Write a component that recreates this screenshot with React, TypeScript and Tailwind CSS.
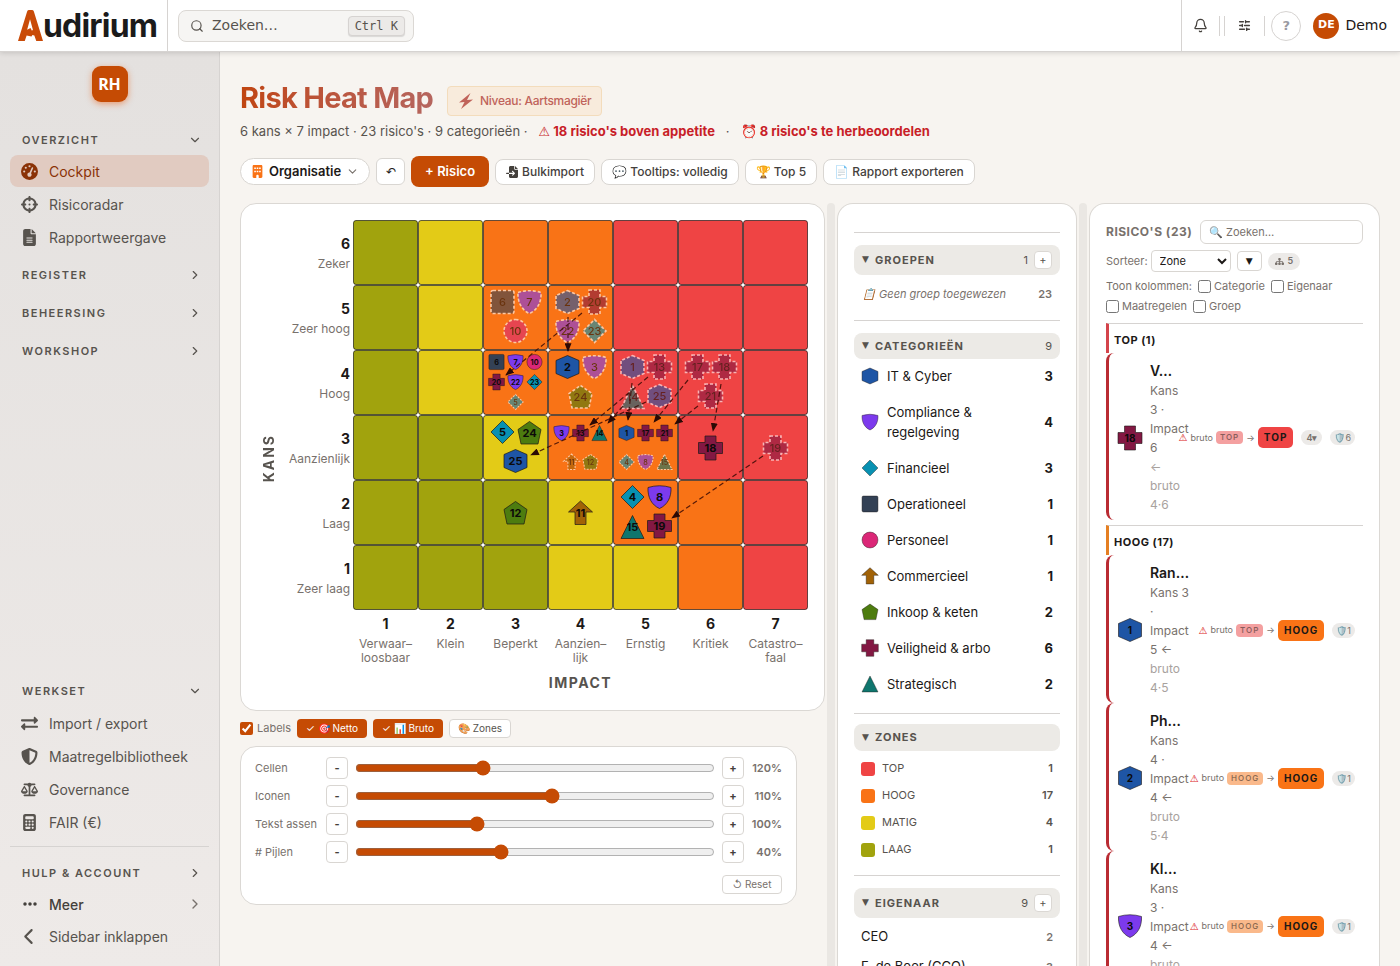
import type { ReactNode } from 'react'
import { Bell, ChevronDown, ChevronRight, Search, SlidersHorizontal } from 'lucide-react'
import { FaExchangeAlt } from 'react-icons/fa'
import {
  FaBuilding,
  FaCalculator,
  FaChevronLeft,
  FaCrosshairs,
  FaEllipsis,
  FaFileImport,
  FaFileLines,
  FaGaugeHigh,
  FaScaleBalanced,
  FaShieldHalved,
  FaSitemap,
} from 'react-icons/fa6'

type ShapeName = 'hex' | 'shield' | 'diamond' | 'square' | 'circle' | 'arrow' | 'pentagon' | 'cross' | 'triangle'

// All shapes live in a 24x24 box centred on 0,0
const SHAPES: Record<ShapeName, { d: string; color: string }> = {
  hex:      { color: '#1e55a5', d: 'M0 -11.5 L11.5 -6.5 V6.5 L0 11.5 L-11.5 6.5 V-6.5 Z' },
  shield:   { color: '#7c3aed', d: 'M-11.5 -9.5 Q0 -13 11.5 -9.5 C12 0 8 8 0 11.5 C-8 8 -12 0 -11.5 -9.5 Z' },
  diamond:  { color: '#0891b2', d: 'M0 -11.5 L11.5 0 L0 11.5 L-11.5 0 Z' },
  square:   { color: '#334155', d: 'M-9.5 -11.5 H9.5 Q11.5 -11.5 11.5 -9.5 V9.5 Q11.5 11.5 9.5 11.5 H-9.5 Q-11.5 11.5 -11.5 9.5 V-9.5 Q-11.5 -11.5 -9.5 -11.5 Z' },
  circle:   { color: '#db2777', d: 'M0 -11.5 A11.5 11.5 0 1 1 0 11.5 A11.5 11.5 0 1 1 0 -11.5 Z' },
  arrow:    { color: '#a16207', d: 'M0 -12 L12 -1 H5.5 V11.5 H-5.5 V-1 H-12 Z' },
  pentagon: { color: '#4d7c0f', d: 'M0 -11.5 L11.5 -3.5 L8.5 11 H-8.5 L-11.5 -3.5 Z' },
  cross:    { color: '#831843', d: 'M-5.5 -12 H5.5 V-5.5 H12 V5.5 H5.5 V12 H-5.5 V5.5 H-12 V-5.5 H-5.5 Z' },
  triangle: { color: '#0f766e', d: 'M0 -11.5 L11.5 11.5 H-11.5 Z' },
}

const ZONE_COLORS: Record<string, string> = {
  T: '#ef4444',
  H: '#f97316',
  M: '#e3cb17',
  L: '#a1a30d',
}

// Top row is kans 6
const ROWS = ['LMHHTTT', 'LMHHTTT', 'LMHHTTT', 'LLMHHTT', 'LLLMHHT', 'LLLMMHT']

const CELL = 65

type Marker = [n: number, shape: ShapeName, x: number, y: number, size: 'lg' | 'sm']

const GROSS: Marker[] = [
  [6, 'square', 150, 82, 'lg'],
  [7, 'shield', 177, 82, 'lg'],
  [10, 'circle', 163, 111, 'lg'],
  [2, 'hex', 215, 82, 'lg'],
  [20, 'cross', 242, 82, 'lg'],
  [22, 'shield', 215, 111, 'lg'],
  [23, 'diamond', 242, 111, 'lg'],
  [5, 'diamond', 163, 182, 'sm'],
  [3, 'shield', 242, 147, 'lg'],
  [24, 'pentagon', 228, 177, 'lg'],
  [1, 'hex', 280, 147, 'lg'],
  [13, 'cross', 307, 147, 'lg'],
  [14, 'triangle', 280, 177, 'lg'],
  [25, 'hex', 307, 176, 'lg'],
  [17, 'cross', 345, 147, 'lg'],
  [18, 'cross', 372, 147, 'lg'],
  [21, 'cross', 358, 176, 'lg'],
  [11, 'arrow', 219, 242, 'sm'],
  [12, 'pentagon', 238, 242, 'sm'],
  [4, 'diamond', 274, 242, 'sm'],
  [8, 'shield', 293, 242, 'sm'],
  [15, 'triangle', 312, 242, 'sm'],
  [19, 'cross', 423, 228, 'lg'],
]

const NET: Marker[] = [
  [6, 'square', 144, 142, 'sm'],
  [7, 'shield', 163, 142, 'sm'],
  [10, 'circle', 182, 142, 'sm'],
  [20, 'cross', 144, 162, 'sm'],
  [22, 'shield', 163, 162, 'sm'],
  [23, 'diamond', 182, 162, 'sm'],
  [2, 'hex', 215, 147, 'lg'],
  [5, 'diamond', 150, 212, 'lg'],
  [24, 'pentagon', 177, 213, 'lg'],
  [25, 'hex', 163, 241, 'lg'],
  [3, 'shield', 209, 213, 'sm'],
  [13, 'cross', 228, 213, 'sm'],
  [14, 'triangle', 247, 213, 'sm'],
  [1, 'hex', 274, 213, 'sm'],
  [17, 'cross', 293, 213, 'sm'],
  [21, 'cross', 312, 213, 'sm'],
  [18, 'cross', 358, 228, 'lg'],
  [12, 'pentagon', 163, 293, 'lg'],
  [11, 'arrow', 228, 293, 'lg'],
  [4, 'diamond', 280, 277, 'lg'],
  [8, 'shield', 307, 277, 'lg'],
  [15, 'triangle', 280, 307, 'lg'],
  [19, 'cross', 307, 306, 'lg'],
]

const ARROWS = [
  [229, 93, 153, 155],
  [215, 97, 215, 131],
  [295, 157, 237, 205],
  [270, 186, 255, 203],
  [293, 182, 178, 235],
  [279, 163, 275, 200],
  [335, 160, 301, 202],
  [368, 164, 360, 211],
  [345, 186, 322, 204],
  [410, 236, 319, 298],
]

const IMPACTS = ['Verwaar–\nloosbaar', 'Klein', 'Beperkt', 'Aanzien–\nlijk', 'Ernstig', 'Kritiek', 'Catastro–\nfaal']
const CHANCES = ['Zeker', 'Zeer hoog', 'Hoog', 'Aanzienlijk', 'Laag', 'Zeer laag']

const CATEGORIES: { name: string; shape: ShapeName; count: number }[] = [
  { name: 'IT & Cyber', shape: 'hex', count: 3 },
  { name: 'Compliance & regelgeving', shape: 'shield', count: 4 },
  { name: 'Financieel', shape: 'diamond', count: 3 },
  { name: 'Operationeel', shape: 'square', count: 1 },
  { name: 'Personeel', shape: 'circle', count: 1 },
  { name: 'Commercieel', shape: 'arrow', count: 1 },
  { name: 'Inkoop & keten', shape: 'pentagon', count: 2 },
  { name: 'Veiligheid & arbo', shape: 'cross', count: 6 },
  { name: 'Strategisch', shape: 'triangle', count: 2 },
]

const ZONES = [
  { name: 'TOP', count: 1, bg: 'bg-[#ef4444]' },
  { name: 'HOOG', count: 17, bg: 'bg-[#f97316]' },
  { name: 'MATIG', count: 4, bg: 'bg-[#e3cb17]' },
  { name: 'LAAG', count: 1, bg: 'bg-[#a1a30d]' },
]

const SLIDERS = [
  { label: 'Cellen', value: '120%', pos: 35 },
  { label: 'Iconen', value: '110%', pos: 55 },
  { label: 'Tekst assen', value: '100%', pos: 33 },
  { label: '# Pijlen', value: '40%', pos: 40 },
]

type Risk = {
  n: number
  shape: ShapeName
  title: string
  lines: string[]
  bruto: string[]
  from: 'TOP' | 'HOOG'
  to: 'TOP' | 'HOOG'
  extra?: string
  measures: number
}

const TOP_RISKS: Risk[] = [
  { n: 18, shape: 'cross', title: 'V…', lines: ['Kans', '3 ·', 'Impact', '6'], bruto: ['←', 'bruto', '4·6'], from: 'TOP', to: 'TOP', extra: '4▾', measures: 6 },
]

const HIGH_RISKS: Risk[] = [
  { n: 1, shape: 'hex', title: 'Ran…', lines: ['Kans 3', '·', 'Impact', '5 ←'], bruto: ['bruto', '4·5'], from: 'TOP', to: 'HOOG', measures: 1 },
  { n: 2, shape: 'hex', title: 'Ph…', lines: ['Kans', '4 ·', 'Impact', '4 ←'], bruto: ['bruto', '5·4'], from: 'HOOG', to: 'HOOG', measures: 1 },
  { n: 3, shape: 'shield', title: 'Kl…', lines: ['Kans', '3 ·', 'Impact', '4 ←'], bruto: ['bruto', '4·4'], from: 'HOOG', to: 'HOOG', measures: 1 },
]

function ShapeIcon({ shape, n, className }: { shape: ShapeName; n?: number; className: string }) {
  return (
    <svg viewBox="-13 -13 26 26" className={className} aria-hidden="true">
      <path d={SHAPES[shape].d} fill={SHAPES[shape].color} stroke="#1c1917" strokeOpacity={0.6} />
      {n !== undefined && (
        <text y={4} textAnchor="middle" fontSize={10} fontWeight={700} fill="#0c0a09">{n}</text>
      )}
    </svg>
  )
}

function MarkerShape({ marker, gross }: { marker: Marker; gross: boolean }) {
  const [n, shape, x, y, size] = marker
  const scale = size === 'lg' ? 1 : 0.66
  return (
    <g transform={`translate(${x - 0.5} ${y}) scale(${scale})`} opacity={gross ? 0.6 : 1}>
      <path
        d={SHAPES[shape].d}
        fill={SHAPES[shape].color}
        stroke={gross ? '#fff' : '#1c1917'}
        strokeOpacity={gross ? 1 : 0.7}
        strokeWidth={gross ? 1.6 : 1}
        strokeDasharray={gross ? '3 2' : undefined}
      />
      <text y={4} textAnchor="middle" fontSize={11} fontWeight={gross ? 500 : 700} fill="#0c0a09">{n}</text>
    </g>
  )
}

function HeatMap() {
  return (
    <svg width={CELL * 7} height={CELL * 6} viewBox={`0 0 ${CELL * 7} ${CELL * 6}`} className="block shrink-0">
      <defs>
        <marker id="head" viewBox="0 0 10 8" refX={9} refY={4} markerWidth={9} markerHeight={7} markerUnits="userSpaceOnUse" orient="auto">
          <path d="M0 0 L10 4 L0 8 Z" fill="#2b0a05" />
        </marker>
      </defs>
      {ROWS.map((row, r) =>
        row.split('').map((zone, c) => (
          <rect
            key={`${r}-${c}`}
            x={c * CELL + 0.5}
            y={r * CELL + 0.5}
            width={CELL - 1}
            height={CELL - 1}
            rx={2.5}
            fill={ZONE_COLORS[zone]}
            stroke="#000"
            strokeOpacity={0.6}
          />
        ))
      )}
      {GROSS.map((m) => <MarkerShape key={m[0]} marker={m} gross />)}
      {NET.map((m) => <MarkerShape key={m[0]} marker={m} gross={false} />)}
      {ARROWS.map(([x1, y1, x2, y2]) => (
        <line key={`${x1}-${y1}`} x1={x1} y1={y1} x2={x2} y2={y2} stroke="#3b0a05" strokeOpacity={0.85} strokeWidth={1.2} strokeDasharray="5 3" markerEnd="url(#head)" />
      ))}
    </svg>
  )
}

function Logo() {
  return (
    <a href="#" aria-label="Audirium" className="flex items-end text-[#1b1b1b]">
      <svg width="25" height="33" viewBox="0 0 26 33" aria-hidden="true" className="mb-px">
        <path d="M9.500 2 Q10 0.500 11.500 0.500 H14.500 Q16 0.500 16.500 2 L26 32.500 H19 L17 27 L15 26.500 L14 28 L9 27 L7 32.500 H0 Z M12.500 10 L9.500 21 L13 19 L14.500 22 L15.500 21 Z" fill="#c94b08" fillRule="evenodd" />
      </svg>
      <span className="text-[32px] leading-[34px] font-bold tracking-tight">udirium</span>
    </a>
  )
}

function NavHead({ label, open = false }: { label: string; open?: boolean }) {
  return (
    <button type="button" className="flex w-full items-center justify-between pr-[7px] pl-3 text-[11px] leading-4 font-semibold tracking-[1.5px] text-[#57534e]">
      {label}
      {open ? <ChevronDown size={14} /> : <ChevronRight size={14} />}
    </button>
  )
}

function NavItem({ icon, label, active = false }: { icon: ReactNode; label: string; active?: boolean }) {
  return (
    <a
      href="#"
      className={`flex h-8 items-center gap-2.5 rounded-lg px-2.5 text-[14px] ${active ? 'bg-[#e1cbc1] text-[#8a3206]' : 'text-[#57534e]'}`}
    >
      <span className="flex w-[19px] justify-center text-[17px]">{icon}</span>
      {label}
    </a>
  )
}

function Sidebar() {
  return (
    <aside className="flex w-[220px] shrink-0 flex-col border-r border-[#d6d3d1] bg-linear-to-b from-[#e4e1df] to-[#eeeae8] px-2.5 pt-3.5 pb-3.5">
      <div className="mx-auto flex size-9 items-center justify-center rounded-[9px] bg-[#c54b04] font-['Noto_Sans',sans-serif] text-[16px] font-bold text-white shadow-[0_2px_6px_rgba(234,88,12,0.5)]">
        RH
      </div>
      <nav className="mt-[30px] flex flex-1 flex-col">
        <NavHead label="OVERZICHT" open />
        <div className="mt-[7px] flex flex-col gap-px">
          <NavItem active icon={<FaGaugeHigh />} label="Cockpit" />
          <NavItem icon={<FaCrosshairs />} label="Risicoradar" />
          <NavItem icon={<FaFileLines />} label="Rapportweergave" />
        </div>
        <div className="mt-3.5 flex flex-col gap-[22px]">
          <NavHead label="REGISTER" />
          <NavHead label="BEHEERSING" />
          <NavHead label="WORKSHOP" />
        </div>
        <div className="mt-auto">
          <NavHead label="WERKSET" open />
          <div className="mt-2 flex flex-col gap-px">
            <NavItem icon={<FaExchangeAlt />} label="Import / export" />
            <NavItem icon={<FaShieldHalved />} label="Maatregelbibliotheek" />
            <NavItem icon={<FaScaleBalanced />} label="Governance" />
            <NavItem icon={<FaCalculator />} label="FAIR (€)" />
          </div>
        </div>
        <hr className="mt-2 mb-[18px] border-[#d6d3d1]" />
        <NavHead label="HULP & ACCOUNT" />
        <a href="#" className="mt-[7px] flex h-8 items-center gap-2.5 pr-1.5 pl-2.5 text-[14px] font-medium text-[#44403c]">
          <span className="flex w-[19px] justify-center text-[16px]"><FaEllipsis /></span>
          <span className="flex-1">Meer</span>
          <ChevronRight size={16} className="text-[#78716c]" />
        </a>
        <NavItem icon={<FaChevronLeft />} label="Sidebar inklappen" />
      </nav>
    </aside>
  )
}

function TopBar() {
  return (
    <header className="relative z-10 flex h-[52px] shrink-0 items-center border-b border-[#d6d3d1] bg-white font-['DejaVu_Sans',sans-serif] shadow-[0_1px_5px_rgba(0,0,0,0.14)]">
      <div className="flex h-full w-[168px] items-center border-r border-[#d6d3d1] pl-[18px] font-['Inter',sans-serif]">
        <Logo />
      </div>
      <button type="button" className="ml-2.5 flex h-8 w-[236px] items-center rounded-lg border border-[#dbd8d4] bg-[#f6f5f3] pr-2 pl-[11px] text-[14px] text-[#57534e]">
        <Search size={14} />
        <span className="ml-2 flex-1 text-left">Zoeken…</span>
        <kbd className="rounded border border-[#d6d3d1] bg-[#eceae8] px-1.5 font-['DejaVu_Sans_Mono',monospace] text-[12px] leading-[18px] shadow-[0_1px_1px_rgba(0,0,0,0.12)]">Ctrl K</kbd>
      </button>
      <div className="ml-auto flex h-full items-center border-l border-[#d6d3d1] pr-[13px] pl-2.5 text-[#44403c]">
        <button type="button" aria-label="Meldingen" className="p-px"><Bell size={15} strokeWidth={2} /></button>
        <span className="ml-2.5 h-5 w-1.5 border-x border-[#d6d3d1]" />
        <button type="button" aria-label="Instellingen" className="ml-3 p-px"><SlidersHorizontal size={13} strokeWidth={2.5} /></button>
        <span className="mr-1.5 ml-3 h-5 border-l border-[#d6d3d1]" />
        <button type="button" className="size-[30px] rounded-full border border-[#d6d3d1] text-[13px] font-bold text-[#9a9aa2]">?</button>
        <span className="ml-3 flex size-[26px] items-center justify-center rounded-full bg-[#c54b04] text-[11px] font-bold text-white">DE</span>
        <span className="ml-1.5 text-[14px] text-[#1c1917]">Demo</span>
      </div>
    </header>
  )
}

function ToolButton({ children }: { children: ReactNode }) {
  return (
    <button type="button" className="flex h-[26px] items-center gap-1 rounded-lg border border-[#d9d6d2] bg-white px-2.5 text-[12px] font-medium whitespace-nowrap text-[#44403c]">
      {children}
    </button>
  )
}

function StepButton({ sign }: { sign: string }) {
  return (
    <button type="button" className="h-[22px] w-[22px] shrink-0 rounded border border-[#d9d6d2] bg-white text-[11px] leading-none font-bold text-[#44403c]">{sign}</button>
  )
}

function ControlPanel() {
  return (
    <div className="mt-2 mr-7 rounded-2xl border border-[#dbd8d4] bg-white px-3.5 py-2.5">
      <div className="flex flex-col gap-1.5">
        {SLIDERS.map((s) => (
          <div key={s.label} className="flex items-center text-[11px] text-[#78716c]">
            <label htmlFor={s.label} className="w-[71px] shrink-0">{s.label}</label>
            <StepButton sign="-" />
            <input id={s.label} type="range" defaultValue={s.pos} className="mx-[7px] min-w-0 flex-1 accent-[#c54b04]" />
            <StepButton sign="+" />
            <span className="w-[38px] shrink-0 text-right font-semibold">{s.value}</span>
          </div>
        ))}
      </div>
      <div className="mt-3 flex justify-end">
        <button type="button" className="h-[19px] w-[60px] rounded border border-[#d9d6d2] text-[10px] text-[#78716c]">↺ Reset</button>
      </div>
    </div>
  )
}

function MapColumn() {
  return (
    <section className="min-w-0 flex-1">
      <div className="flex justify-end rounded-2xl border border-[#dbd8d4] bg-white p-4 pb-[17px]">
        <div className="flex w-6 items-center justify-center">
          <span className="mt-1 rotate-180 text-[14px] font-bold tracking-[2px] text-[#57534e] [writing-mode:vertical-rl]">KANS</span>
        </div>
        <div>
          <div className="flex">
            <div className="mr-[3px] flex flex-col text-right">
              {CHANCES.map((label, i) => (
                <div key={label} className="flex h-[65px] w-[70px] flex-col items-end justify-center pt-0.5">
                  <span className="text-[14px] leading-5 font-bold text-[#1c1917]">{6 - i}</span>
                  <span className="text-[12px] leading-5 whitespace-nowrap text-[#78716c]">{label}</span>
                </div>
              ))}
            </div>
            <HeatMap />
          </div>
          <div className="ml-[73px] grid grid-cols-7 pt-1 text-center">
            {IMPACTS.map((label, i) => (
              <div key={label}>
                <div className="text-[14px] leading-5 font-bold text-[#1c1917]">{i + 1}</div>
                <div className="mt-[3px] text-[12px] leading-3.5 whitespace-pre-line text-[#78716c]">{label}</div>
              </div>
            ))}
          </div>
          <div className="mt-2 ml-[73px] text-center text-[14px] leading-5 font-bold tracking-[1.5px] text-[#57534e]">IMPACT</div>
        </div>
      </div>
      <div className="mt-2 flex h-[19px] items-center gap-1.5 text-[10px] text-[#57534e]">
        <label className="flex items-center gap-1 text-[11px] text-[#78716c]">
          <input type="checkbox" defaultChecked className="size-[13px] accent-[#c54b04]" />
          Labels
        </label>
        <button type="button" className="h-[19px] rounded bg-[#c54b04] px-[9px] text-white">✓ 🎯 Netto</button>
        <button type="button" className="h-[19px] rounded bg-[#c54b04] px-[9px] text-white">✓ 📊 Bruto</button>
        <button type="button" className="h-[19px] rounded border border-[#d9d6d2] bg-white px-2">🎨 Zones</button>
      </div>
      <ControlPanel />
    </section>
  )
}

function GroupHead({ label, count, add = false, className }: { label: string; count?: number; add?: boolean; className: string }) {
  return (
    <div className={`flex items-center rounded-lg bg-[#eceae6] px-2 text-[11px] text-[#57534e] ${className}`}>
      <span className="w-[13px] font-['DejaVu_Sans',sans-serif] text-[9px]">▼</span>
      <h3 className="flex-1 font-bold tracking-[1px]">{label}</h3>
      <span>{count}</span>
      {add && (
        <button type="button" aria-label={`${label} toevoegen`} className="ml-1.5 size-[18px] rounded border border-[#dbd8d4] bg-white text-[11px] leading-none">+</button>
      )}
    </div>
  )
}

function LegendColumn() {
  return (
    <section className="w-[240px] shrink-0 overflow-hidden rounded-t-2xl border border-b-0 border-[#dbd8d4] bg-white px-4 pt-7">
      <hr className="border-[#d6d3d1]" />
      <GroupHead label="GROEPEN" count={1} add className="mt-3 h-[30px]" />
      <div className="mt-[7px] flex h-6 items-center justify-between px-2 text-[11px] text-[#78716c]">
        <em>📋 Geen groep toegewezen</em>
        <b className="font-semibold">23</b>
      </div>
      <hr className="mt-3.5 border-[#d6d3d1]" />
      <GroupHead label="CATEGORIEËN" count={9} className="mt-3 h-[26px]" />
      <ul className="-mt-px text-[13px] leading-5 text-[#1c1917]">
        {CATEGORIES.map((c) => (
          <li key={c.name} className="flex items-center px-[7px] py-2">
            <ShapeIcon shape={c.shape} className="size-[18px] shrink-0" />
            <span className="ml-2 w-[120px]">{c.name}</span>
            <b className="ml-auto">{c.count}</b>
          </li>
        ))}
      </ul>
      <hr className="mt-[11px] border-[#d6d3d1]" />
      <GroupHead label="ZONES" className="mt-2.5 h-[27px]" />
      <ul className="mt-1 text-[11px] text-[#57534e]">
        {ZONES.map((z) => (
          <li key={z.name} className="flex h-[27px] items-center px-[7px]">
            <span className={`mr-[7px] size-3.5 rounded-[3px] ${z.bg}`} />
            {z.name}
            <b className="ml-auto font-semibold">{z.count}</b>
          </li>
        ))}
      </ul>
      <hr className="mt-3 border-[#d6d3d1]" />
      <GroupHead label="EIGENAAR" count={9} add className="mt-3 h-[30px]" />
      <ul className="mt-1 text-[13px] text-[#1c1917]">
        {[['CEO', 2], ['F. de Boer (CCO)', 3]].map(([name, count]) => (
          <li key={name} className="flex h-[30px] items-center justify-between px-[7px]">
            {name}
            <b className="text-[11px] font-semibold text-[#78716c]">{count}</b>
          </li>
        ))}
      </ul>
    </section>
  )
}

function RiskRow({ risk }: { risk: Risk }) {
  return (
    <li className="flex items-center rounded-lg border-l-3 border-[#b92b32] pt-2 pr-2 pb-1.5 pl-2">
      <ShapeIcon shape={risk.shape} n={risk.n} className="size-[26px] shrink-0" />
      <div className="ml-[7px] min-w-0 flex-1 text-[12px] leading-[19px] whitespace-nowrap text-[#78716c]">
        <div className="text-[14px] leading-5 font-semibold text-[#1c1917]">{risk.title}</div>
        {risk.lines.map((line) => <div key={line}>{line}</div>)}
        {risk.bruto.map((line) => <div key={line} className="text-[#a8a29e]">{line}</div>)}
      </div>
      <div className="flex shrink-0 items-center text-[9px] text-[#78716c]">
        <span className="font-['DejaVu_Sans',sans-serif] text-[10px] text-[#dc2626]">⚠</span>
        <span className="ml-[3px]">bruto</span>
        <span className={`ml-[3px] rounded px-1 text-[8px] leading-[13px] font-semibold tracking-[1px] text-[#1c1917]/50 ${risk.from === 'TOP' ? 'bg-[#f4a0a0]' : 'bg-[#fab98b]'}`}>
          {risk.from}
        </span>
        <span className="ml-[3px]">→</span>
        <span className={`ml-[3px] rounded-[5px] px-1.5 text-[10px] leading-[21px] font-bold tracking-[1px] text-[#1c1917] ${risk.to === 'TOP' ? 'bg-[#ef4444]' : 'bg-[#f97316]'}`}>
          {risk.to}
        </span>
        {risk.extra && <span className="ml-2 rounded-full bg-[#eceae8] px-[5px] leading-[15px] font-semibold">{risk.extra}</span>}
        <span className="ml-2 rounded-full bg-[#eceae8] px-1 leading-[15px]">🛡️{risk.measures}</span>
      </div>
    </li>
  )
}

function Check({ label }: { label: string }) {
  return (
    <label className="flex items-center gap-[3px]">
      <input type="checkbox" className="size-[13px]" />
      {label}
    </label>
  )
}

function RiskColumn() {
  return (
    <section className="w-[291px] shrink-0 overflow-hidden rounded-t-2xl border border-b-0 border-[#dbd8d4] bg-white px-4 pt-4">
      <div className="flex items-center justify-between">
        <h3 className="text-[12px] font-bold tracking-[0.5px] text-[#78716c]">RISICO'S (23)</h3>
        <input type="text" aria-label="Zoek risico" placeholder="🔍 Zoeken…" className="h-6 w-[163px] rounded-md border border-[#d9d6d2] px-2 text-[11px] placeholder:text-[#78716c]" />
      </div>
      <div className="mt-1.5 flex items-center text-[11px] text-[#78716c]">
        <label htmlFor="sort">Sorteer:</label>
        <select id="sort" className="ml-[3px] h-[22px] w-20 rounded border border-[#d9d6d2] bg-white px-1 text-[#1c1917]">
          <option>Zone</option>
        </select>
        <button type="button" aria-label="Sorteerrichting" className="ml-1.5 h-5 w-[25px] rounded border border-[#d9d6d2] font-['DejaVu_Sans',sans-serif] text-[9px] leading-none text-[#1c1917]">▼</button>
        <span className="ml-1.5 flex h-[17px] items-center gap-1 rounded-full bg-[#eceae8] px-[7px] text-[9px] font-semibold"><FaSitemap />5</span>
      </div>
      <div className="mt-1 flex flex-wrap items-center gap-x-1.5 text-[11px] leading-5 text-[#78716c]">
        <span>Toon kolommen:</span>
        <Check label="Categorie" />
        <Check label="Eigenaar" />
        <Check label="Maatregelen" />
        <Check label="Groep" />
      </div>
      <div className="mt-[7px] flex h-[30px] items-center border-t border-l-3 border-t-[#d6d3d1] border-l-[#d4444b] pt-1 pl-[5px] text-[11px] font-bold tracking-[0.5px] text-[#1c1917]">TOP (1)</div>
      <ul>{TOP_RISKS.map((r) => <RiskRow key={r.n} risk={r} />)}</ul>
      <div className="mt-[5px] flex h-[30px] items-center border-t border-l-3 border-t-[#d6d3d1] border-l-[#e57f22] pt-1 pl-[5px] text-[11px] font-bold tracking-[0.5px] text-[#1c1917]">HOOG (17)</div>
      <ul>{HIGH_RISKS.map((r) => <RiskRow key={r.n} risk={r} />)}</ul>
    </section>
  )
}

export default function App() {
  return (
    <div className="flex h-screen flex-col overflow-hidden bg-[#f7f4f0] font-['Inter',sans-serif] text-[#1c1917]">
      <TopBar />
      <div className="flex min-h-0 flex-1">
        <Sidebar />
        <main className="flex min-w-0 flex-1 flex-col px-5 pt-7">
          <div className="flex items-center">
            <h1 className="bg-linear-to-r from-[#c0450e] to-[#b5655e] bg-clip-text text-[29px] leading-9 font-bold tracking-tight text-transparent">Risk Heat Map</h1>
            <span className="mt-1.5 ml-3.5 flex h-[30px] items-center gap-1.5 rounded border border-[#f3dcbc] bg-[#f8ebdc] px-2.5 text-[12px] font-medium tracking-tight text-[#c0635a]">
              <svg width="16" height="16" viewBox="0 0 16 16" fill="currentColor" aria-hidden="true">
                <path d="M12.500 0 L1 9.500 L6.500 9 L3 16 L15 6.500 L9 7 Z" />
              </svg>
              Niveau: Aartsmagiër
            </span>
          </div>
          <p className="mt-[5px] text-[13px] leading-5 whitespace-pre text-[#57534e]">
            6 kans × 7 impact · 23 risico's · 9 categorieën ·{'   '}
            <b className="text-[#c81e28]"><span className="font-['DejaVu_Sans',sans-serif]">⚠</span> 18 risico's boven appetite</b>{'   ·   '}
            <b className="text-[#c81e28]">⏰ 8 risico's te herbeoordelen</b>
          </p>
          <div className="mt-3.5 flex items-center gap-1.5">
            <button type="button" className="flex h-[27px] items-center gap-[5px] rounded-full border border-[#d9d6d2] bg-white px-2.5 text-[13px] font-semibold">
              <FaBuilding className="text-[13px] text-[#f97316]" />
              Organisatie
              <ChevronDown size={13} className="text-[#78716c]" />
            </button>
            <button type="button" aria-label="Ongedaan maken" className="h-[27px] w-[29px] rounded-md border border-[#d9d6d2] bg-white text-[12px]">↶</button>
            <button type="button" className="h-[31px] rounded-lg bg-[#c54b04] px-3.5 text-[13px] font-semibold text-white">+ Risico</button>
            <ToolButton><FaFileImport />Bulkimport</ToolButton>
            <ToolButton><span>💬 Tooltips: volledig</span></ToolButton>
            <ToolButton><span>🏆 Top 5</span></ToolButton>
            <ToolButton><span>📄 Rapport exporteren</span></ToolButton>
          </div>
          <div className="mt-4 flex min-h-0 flex-1 gap-0.5">
            <MapColumn />
            <div className="w-2 shrink-0 rounded-t bg-[#eae7e3]" />
            <LegendColumn />
            <div className="w-2 shrink-0 rounded-t bg-[#eae7e3]" />
            <RiskColumn />
          </div>
        </main>
      </div>
    </div>
  )
}
